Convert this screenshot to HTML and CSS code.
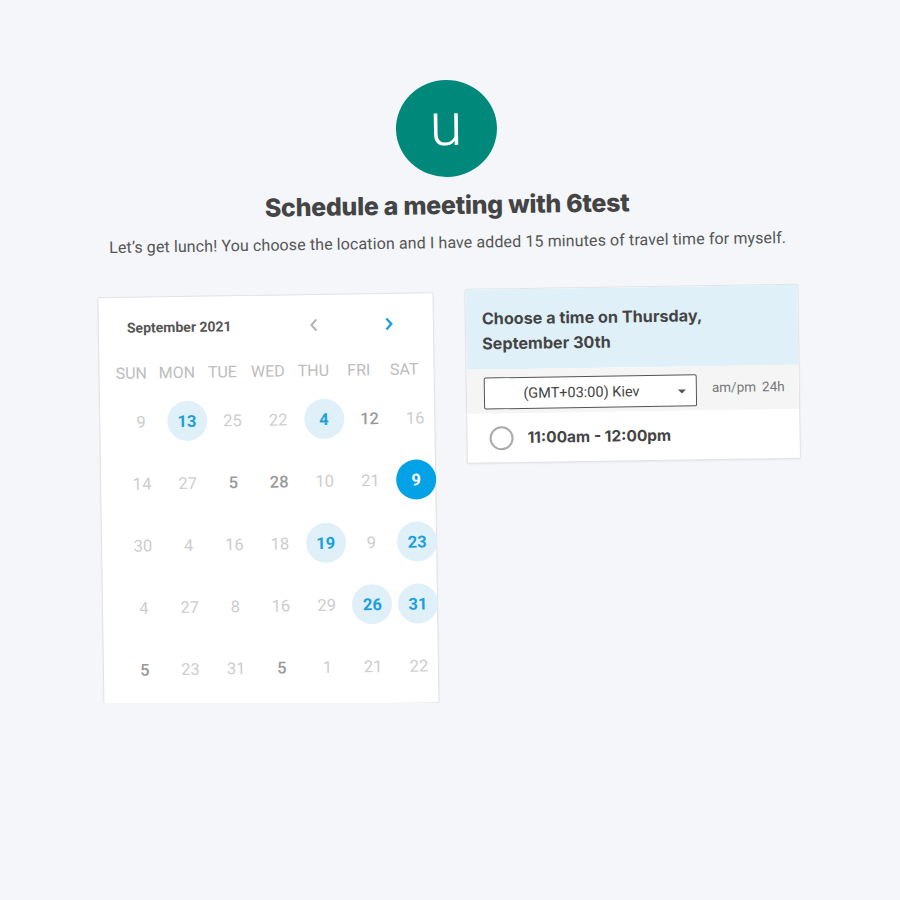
FILE: index.html
```html
<!DOCTYPE html>
<html>
<head>
<meta charset="utf-8">
<link rel="stylesheet" href="styles.css">
</head>
<body>
<main class="page">
  <div class="avatar">u</div>
  <h1 class="title">Schedule a meeting with 6test</h1>
  <p class="subtitle">Let’s get lunch! You choose the location and I have added 15 minutes of travel time for myself.</p>
  <div class="cards">
    <section class="calendar">
      <div class="cal-head">
        <span class="month">September 2021</span>
        <span class="nav">
          <svg class="arrow prev" width="12" height="14" viewBox="0 0 12 14"><path d="M8.5 1.5 L3.5 7 L8.5 12.5" fill="none" stroke="#b5b5b5" stroke-width="2"/></svg>
          <svg class="arrow next" width="12" height="14" viewBox="0 0 12 14"><path d="M3.5 1.5 L8.5 7 L3.5 12.5" fill="none" stroke="#1a9fdc" stroke-width="2.3"/></svg>
        </span>
      </div>
      <div class="weekdays">
        <span>SUN</span><span>MON</span><span>TUE</span><span>WED</span><span>THU</span><span>FRI</span><span>SAT</span>
      </div>
      <div class="days">
        <span>9</span><span class="avail">13</span><span>25</span><span>22</span><span class="avail">4</span><span class="dark">12</span><span>16</span>
        <span>14</span><span>27</span><span class="dark">5</span><span class="dark">28</span><span>10</span><span>21</span><span class="sel">9</span>
        <span>30</span><span>4</span><span>16</span><span>18</span><span class="avail">19</span><span>9</span><span class="avail">23</span>
        <span>4</span><span>27</span><span>8</span><span>16</span><span>29</span><span class="avail">26</span><span class="avail">31</span>
        <span class="dark">5</span><span>23</span><span>31</span><span class="dark">5</span><span>1</span><span>21</span><span>22</span>
      </div>
    </section>
    <section class="times">
      <div class="times-head">Choose a time on Thursday,<br>September 30th</div>
      <div class="tz-row">
        <div class="tz-select"><span>(GMT+03:00) Kiev</span><span class="caret"></span></div>
        <div class="fmt"><span>am/pm</span><span>24h</span></div>
      </div>
      <div class="slot">
        <span class="radio"></span>
        <span class="slot-text">11:00am - 12:00pm</span>
      </div>
    </section>
  </div>
</main>
</body>
</html>
```
FILE: styles.css
```css
html, body {
  margin: 0;
  padding: 0;
  background: #f4f6fa;
}
body {
  font-family: Roboto, "Liberation Sans", sans-serif;
  color: #444;
}
.page {
  width: 702px;
  margin: 0 auto;
  padding-top: 80px;
  display: flex;
  flex-direction: column;
  align-items: center;
  transform: rotate(-0.85deg);
  transform-origin: 50% 400px;
}
.avatar {
  width: 101px;
  height: 97px;
  border-radius: 50%;
  background: #00897b;
  color: #fff;
  font-family: Roboto, sans-serif;
  font-weight: 300;
  font-size: 60px;
  line-height: 90px;
  text-align: center;
}
.title {
  margin: 13px 0 0;
  font-family: Inter, "Liberation Sans", sans-serif;
  font-weight: 800;
  font-size: 25px;
  letter-spacing: -0.3px;
  line-height: 31px;
  color: #444;
}
.subtitle {
  margin: 11px 0 0;
  font-size: 16px;
  letter-spacing: 0.11px;
  line-height: 22px;
  color: #555;
  white-space: nowrap;
}
.cards {
  margin-top: 38px;
  width: 702px;
  display: flex;
  align-items: flex-start;
  gap: 31px;
}
.calendar {
  width: 336px;
  height: 411px;
  box-sizing: border-box;
  background: #fff;
  border: 1px solid #e1e3e6;
  border-radius: 2px;
  box-shadow: 0 1px 2px rgba(0,0,0,0.05);
}
.cal-head {
  display: flex;
  align-items: center;
  justify-content: space-between;
  padding: 19px 0 0 28px;
  height: 22px;
}
.month {
  font-size: 14px;
  font-weight: 700;
  color: #555;
}
.nav {
  display: flex;
  gap: 63px;
  margin-right: 38px;
}
.weekdays {
  display: grid;
  grid-template-columns: repeat(7, 45.5px);
  padding-left: 9px;
  margin-top: 24px;
  font-size: 16px;
  color: #bdbdbd;
  text-align: center;
  height: 22px;
  line-height: 22px;
}
.days {
  display: grid;
  grid-template-columns: repeat(7, 45.7px);
  grid-auto-rows: 62px;
  padding-left: 18px;
  margin-top: 6px;
  justify-items: center;
  align-items: center;
}
.days span {
  width: 40px;
  height: 40px;
  border-radius: 50%;
  display: flex;
  align-items: center;
  justify-content: center;
  font-size: 16.5px;
  color: #cdcdcd;
}
.days .dark {
  color: #999;
  font-weight: 500;
}
.days .avail {
  background: #e0f0f8;
  color: #1a9fdc;
  font-weight: 700;
}
.days .sel {
  background: #03a1e6;
  color: #fff;
  font-weight: 700;
}
.times {
  width: 334px;
  margin-top: -3px;
  box-sizing: border-box;
  background: #fff;
  border: 1px solid #e1e3e6;
  border-radius: 2px;
  box-shadow: 0 1px 2px rgba(0,0,0,0.05);
  overflow: hidden;
}
.times-head {
  background: #e0f0f8;
  padding: 17px 16px 12px;
  height: 51px;
  font-family: Inter, "Liberation Sans", sans-serif;
  font-weight: 700;
  font-size: 16.2px;
  line-height: 25px;
  color: #444;
}
.tz-row {
  background: #f5f5f5;
  height: 44px;
  display: flex;
  align-items: center;
  padding: 0 0 0 17px;
  gap: 15px;
}
.tz-select {
  width: 213px;
  height: 32px;
  box-sizing: border-box;
  padding-right: 18px;
  border: 1px solid #555;
  border-radius: 2px;
  background: #fff;
  display: flex;
  align-items: center;
  justify-content: center;
  position: relative;
  font-size: 14.5px;
  color: #444;
  margin-top: 4px;
}
.caret {
  position: absolute;
  right: 10px;
  top: 14px;
  width: 0;
  height: 0;
  border-left: 4px solid transparent;
  border-right: 4px solid transparent;
  border-top: 4px solid #555;
}
.fmt {
  display: flex;
  gap: 6px;
  font-size: 13.5px;
  color: #777;
  margin-top: -2px;
}
.slot {
  height: 49px;
  display: flex;
  align-items: center;
  padding-left: 22px;
  gap: 14px;
}
.radio {
  width: 20px;
  height: 20px;
  border: 2px solid #aaa;
  border-radius: 50%;
}
.slot-text {
  font-family: Inter, "Liberation Sans", sans-serif;
  font-weight: 700;
  font-size: 15.5px;
  color: #444;
}
```
